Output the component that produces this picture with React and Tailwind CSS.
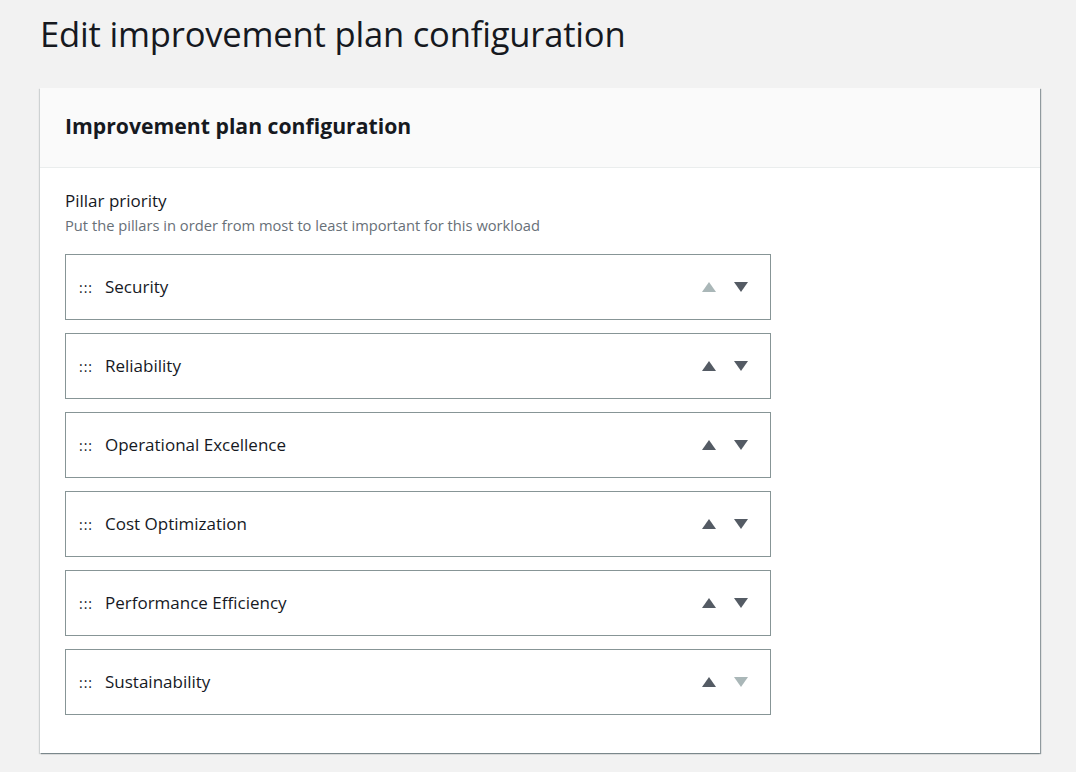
import React from "react";

const pillars = [
  "Security",
  "Reliability",
  "Operational Excellence",
  "Cost Optimization",
  "Performance Efficiency",
  "Sustainability",
];

function Tri({ dir, disabled }) {
  const fill = disabled ? "#aab7b8" : "#545b64";
  return (
    <svg width="14" height="10" viewBox="0 0 14 10">
      {dir === "up" ? (
        <polygon points="7,0 14,10 0,10" fill={fill} />
      ) : (
        <polygon points="0,0 14,0 7,10" fill={fill} />
      )}
    </svg>
  );
}

export default function App() {
  return (
    <div
      className="min-h-[772px] bg-[#f2f2f2] px-10 pt-[14px] text-[#16191f]"
      style={{ fontFamily: '"Open Sans", "Noto Sans", sans-serif' }}
    >
      <h1 className="text-[34.6px] leading-[40px] font-normal tracking-[-0.2px]">
        Edit improvement plan configuration
      </h1>
      <div className="mt-[34px] w-[1000px] bg-white shadow-[1px_1px_1px_0_rgba(0,28,36,0.3),1px_1px_1px_0_rgba(0,28,36,0.15),-1px_1px_1px_0_rgba(0,28,36,0.15)]">
        <div className="h-[80px] bg-[#fafafa] border-b border-[#eaeded] px-[25px] flex items-center">
          <h2 className="text-[21.2px] font-bold leading-[26px] pb-[3px]">
            Improvement plan configuration
          </h2>
        </div>
        <div className="px-[25px] pt-[21px] pb-[38px]">
          <div className="text-[17px] leading-[24px]">Pillar priority</div>
          <div className="text-[14.7px] leading-[20px] text-[#687078] mt-[2px]">
            Put the pillars in order from most to least important for this workload
          </div>
          <div className="mt-[19px] flex flex-col gap-[13px] w-[706px]">
            {pillars.map((p, i) => (
              <div
                key={p}
                className="h-[66px] border border-[#879596] flex items-center pl-[13px] pr-[22px]"
              >
                <span className="text-[14px] text-[#16191f] w-[26px] tracking-[1px]">:::</span>
                <span className="text-[17px]">{p}</span>
                <div className="ml-auto flex items-center gap-[18px]">
                  <Tri dir="up" disabled={i === 0} />
                  <Tri dir="down" disabled={i === pillars.length - 1} />
                </div>
              </div>
            ))}
          </div>
        </div>
      </div>
    </div>
  );
}
